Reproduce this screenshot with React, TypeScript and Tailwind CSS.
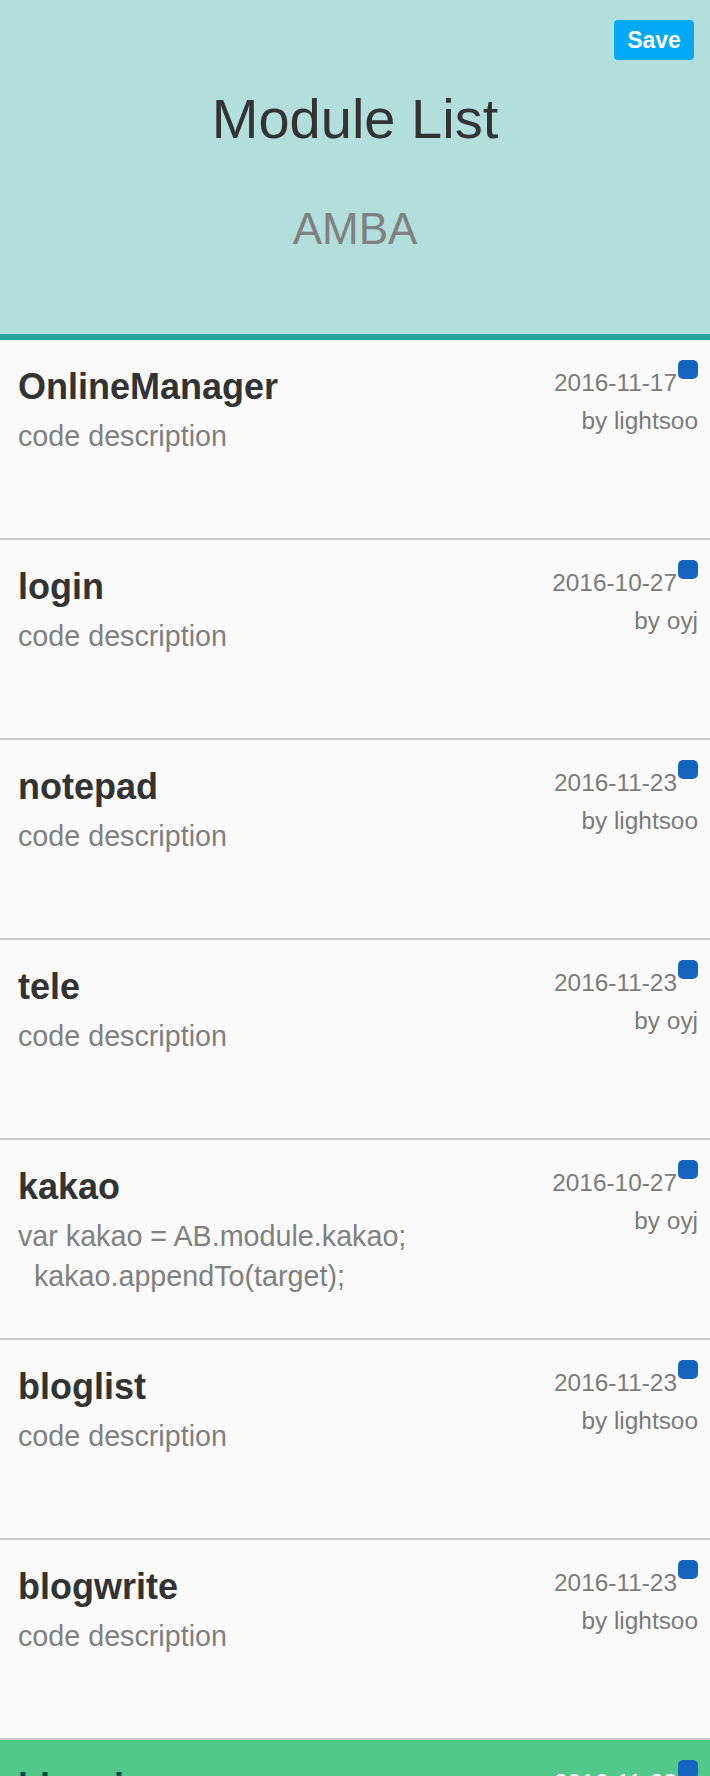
import React from "react";

type Item = { title: string; desc: string; date: string; author: string; active?: boolean };

const items: Item[] = [
  { title: "OnlineManager", desc: "code description", date: "2016-11-17", author: "by lightsoo" },
  { title: "login", desc: "code description", date: "2016-10-27", author: "by oyj" },
  { title: "notepad", desc: "code description", date: "2016-11-23", author: "by lightsoo" },
  { title: "tele", desc: "code description", date: "2016-11-23", author: "by oyj" },
  { title: "kakao", desc: "var kakao = AB.module.kakao;\n  kakao.appendTo(target);", date: "2016-10-27", author: "by oyj" },
  { title: "bloglist", desc: "code description", date: "2016-11-23", author: "by lightsoo" },
  { title: "blogwrite", desc: "code description", date: "2016-11-23", author: "by lightsoo" },
  { title: "blogview", desc: "code description", date: "2016-11-23", author: "by lightsoo", active: true },
];

function Row({ item }: { item: Item }) {
  return (
    <div
      className={
        "flex h-[200px] justify-between border-b-2 border-[#c8c8c8] pl-[18px] pr-[12px] pt-[23px] " +
        (item.active ? "bg-[#52c98b]" : "bg-[#fafafa]")
      }
    >
      <div className="mt-[2px] flex flex-col">
        <div className={"text-[36px] font-bold leading-[44px] " + (item.active ? "text-[#004d40]" : "text-[#333333]")}>
          {item.title}
        </div>
        <div className={"mt-[7px] whitespace-pre text-[28.7px] leading-[40px] " + (item.active ? "text-white" : "text-[#808080]")}>
          {item.desc}
        </div>
      </div>
      <div className={"mt-[1px] flex flex-col items-end text-[24.4px] leading-[38px] " + (item.active ? "text-white" : "text-[#7b7b7b]")}>
        <div className="flex items-start">
          <span>{item.date}</span>
          <span className="ml-[1px] mt-[-4px] h-[19px] w-[20px] rounded-[5px] bg-[#1565c0]" />
        </div>
        <div>{item.author}</div>
      </div>
    </div>
  );
}

export default function App() {
  return (
    <div className="w-[710px] min-h-[1776px] bg-[#fafafa]" style={{ fontFamily: '"Liberation Sans", Arial, sans-serif' }}>
      <header className="relative flex h-[340px] flex-col items-center border-b-[6px] border-[#26a69a] bg-[#b2dfdb] pt-[87px]">
        <button className="absolute right-[16px] top-[20px] flex h-[40px] w-[80px] items-center justify-center rounded-[4px] bg-[#03a9f4] text-[23px] font-bold text-white">
          Save
        </button>
        <h1 className="text-[56px] leading-[64px] text-[#333333]">Module List</h1>
        <div className="mt-[52px] text-[44px] leading-[52px] text-[#808080]">AMBA</div>
      </header>
      <div className="flex flex-col">
        {items.map((it) => (
          <Row key={it.title} item={it} />
        ))}
      </div>
    </div>
  );
}
